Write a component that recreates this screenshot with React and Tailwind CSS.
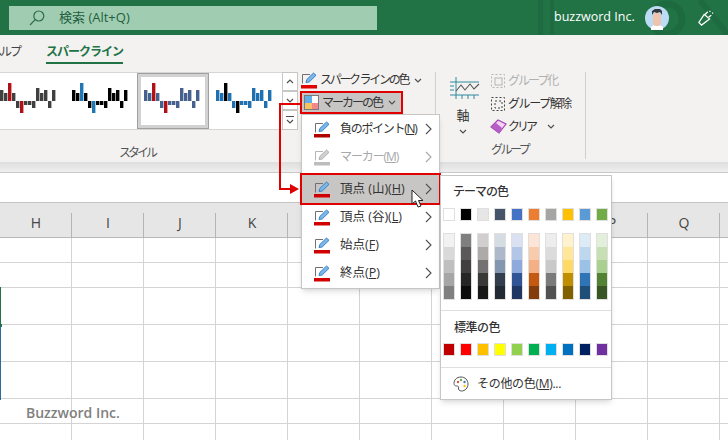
import React from "react";

const jp = "font-['Open_Sans','Noto_Sans_CJK_JP',sans-serif]";

const columns = ["H", "I", "J", "K", "L", "M", "N", "O", "P", "Q", ""];
const rowHeights = ["h-[25px]", "h-[25px]", "h-[37px]", "h-[37px]", "h-[37px]", "h-[25px]", "h-[25px]"];

// sparkline bars: positive goes up, negative goes down
const bars = [11, 8, 18, 8, -7, -12, -4, -4, -7, 13, 8, 11, -7, 11];

const thumbs = [
  { id: 1, cell: "w-[72px]", base: "#404040", high: "#b01116" },
  { id: 2, cell: "w-[65px]", base: "#000000", high: "#1f77b4" },
  { id: 3, cell: "w-[72px]", base: "#47618f", high: "#b01116", selected: true },
  { id: 4, cell: "w-[73px] pl-[7px]", base: "#1f70b0", high: "#000000" },
];

const themeColors = ["#ffffff", "#000000", "#e7e6e6", "#44546a", "#4472c4", "#ed7d31", "#a5a5a5", "#ffc000", "#5b9bd5", "#70ad47"];

const shades = [
  ["#f2f2f2", "#d9d9d9", "#bfbfbf", "#a6a6a6", "#808080"],
  ["#7f7f7f", "#595959", "#404040", "#262626", "#0d0d0d"],
  ["#d0cece", "#aeaaaa", "#757171", "#3b3838", "#181717"],
  ["#d6dce4", "#adb9ca", "#8497b0", "#333f4f", "#222b35"],
  ["#d9e1f2", "#b4c6e7", "#8ea9db", "#305496", "#203764"],
  ["#fce4d6", "#f8cbad", "#f4b084", "#c65911", "#833c0c"],
  ["#ededed", "#dbdbdb", "#c9c9c9", "#7b7b7b", "#525252"],
  ["#fff2cc", "#ffe699", "#ffd966", "#bf8f00", "#806000"],
  ["#ddebf7", "#bdd7ee", "#9bc2e6", "#2f75b5", "#1f4e78"],
  ["#e2efda", "#c6e0b4", "#a9d08e", "#548235", "#375623"],
];

const standardColors = ["#c00000", "#ff0000", "#ffc000", "#ffff00", "#92d050", "#00b050", "#00b0f0", "#0070c0", "#002060", "#7030a0"];

const Chevron = ({ dir = "down", className = "", color = "#505050" }) => {
  const points = {
    down: "1,1 4,4 7,1",
    up: "1,4 4,1 7,4",
  };
  return (
    <svg width="8" height="5" viewBox="0 0 8 5" className={className}>
      <polyline points={points[dir]} fill="none" stroke={color} strokeWidth="1.2" />
    </svg>
  );
};

const ChevronRight = ({ color = "#505050" }) => (
  <svg width="7" height="12" viewBox="0 0 7 12">
    <polyline points="1,1 6,6 1,11" fill="none" stroke={color} strokeWidth="1.1" />
  </svg>
);

const PenIcon = ({ bar = "#d00000", muted = false }) => (
  <svg width="17" height="17" viewBox="0 0 17 17" className="shrink-0">
    <path d="M1.5 11.5V2.5H9" fill="none" stroke={muted ? "#b5b5b5" : "#707070"} strokeWidth="1" />
    <path d="M5 10.5L5.8 7.5L12.5 1L15 3.3L8.2 10Z" fill={muted ? "#d0d0d0" : "#7db6e8"} stroke={muted ? "#a8a8a8" : "#2b78c2"} strokeWidth="0.9" />
    <rect x="0" y="13" width="16" height="3.5" fill={muted ? "#bdbdbd" : bar} />
  </svg>
);

const Sparkline = ({ base, high }) => (
  <svg width="56" height="36" viewBox="0 0 56 36" className="shrink-0">
    {bars.map((v, i) => {
      const isMark = i === 2 || i === 5;
      return (
        <rect
          key={i}
          x={i * 4}
          y={v > 0 ? 18 - v : 18}
          width="3.4"
          height={Math.abs(v)}
          fill={isMark ? high : base}
        />
      );
    })}
  </svg>
);

const MenuItem = ({ label, disabled, active, mt, bar, text = "text-[12.5px]" }) => (
  <div
    className={`flex items-center h-[28px] pl-[12px] pr-[7px] ${mt ? "mt-[4px]" : ""} ${active ? "bg-[#c8c6c4] outline-2 outline-[#e00000]" : ""}`}
  >
    <PenIcon muted={disabled} bar={bar} />
    <span className={`ml-[9px] flex-1 whitespace-nowrap ${text} ${disabled ? "text-[#a8a8a8]" : "text-[#333333]"}`}>{label}</span>
    <ChevronRight color={disabled ? "#a8a8a8" : "#505050"} />
  </div>
);

const Swatch = ({ color }) => (
  <div className="w-[12px] h-[13px] shrink-0 border border-[#e1dfdd]" style={{ backgroundColor: color }} />
);

const App = () => {
  return (
    <div className={`relative w-[728px] h-[440px] overflow-hidden flex flex-col bg-white ${jp}`}>
      {/* title bar */}
      <div className="relative h-[35px] shrink-0 bg-[#217346] flex items-center overflow-hidden">
        <svg width="200" height="35" viewBox="0 0 200 35" className="absolute right-0 top-0">
          <circle cx="139" cy="19" r="15" fill="none" stroke="#1d6a40" strokeWidth="7" />
          <rect x="10" y="0" width="5" height="35" fill="#1e6b41" />
          <rect x="22" y="0" width="4" height="35" fill="#1e6b41" />
          <path d="M172 0L200 35" stroke="#1e6b41" strokeWidth="6" />
        </svg>
        <div className="relative ml-[9px] w-[368px] h-[24px] bg-[#a0cdb1] flex items-center">
          <svg width="16" height="16" viewBox="0 0 16 16" className="ml-[20px]">
            <circle cx="9.8" cy="6" r="5" fill="none" stroke="#2c6e49" strokeWidth="1.2" />
            <line x1="6.2" y1="9.6" x2="1" y2="15" stroke="#2c6e49" strokeWidth="1.2" />
          </svg>
          <span className="ml-[14px] text-[13px] text-[#235f3e]">検索 (Alt+Q)</span>
        </div>
        <span className="relative ml-[177px] w-[80px] text-[12.5px] text-white whitespace-nowrap">buzzword Inc.</span>
        <svg width="24" height="24" viewBox="0 0 24 24" className="relative ml-[11px]">
          <circle cx="12" cy="12" r="12" fill="#bcdcf5" />
          <path d="M6 24V21L9 19H15L18 21V24Z" fill="#ffffff" />
          <rect x="8" y="7" width="8" height="13" rx="3" fill="#efc4ae" />
          <path d="M7 9L7 5L10 3L15 3L17 5L17 9L15 6L12 7L9 6Z" fill="#33383d" />
        </svg>
        <svg width="16" height="16" viewBox="0 0 18 18" className="relative ml-[29px]">
          <path d="M1 14L7 5L13 10L4 17Z" fill="none" stroke="#ffffff" strokeWidth="1.4" />
          <path d="M8 5L11 2M12 8L15 6M13 1L14 2M16 3L17 4" stroke="#ffffff" strokeWidth="1.4" />
        </svg>
      </div>

      {/* tabs */}
      <div className="h-[34px] shrink-0 bg-[#f3f2f1] flex items-start text-[12px] overflow-hidden">
        <span className="ml-[-10px] w-[56px] mt-[8px] tracking-[-2px] text-[#444444] whitespace-nowrap">ヘルプ</span>
        <div className="flex flex-col">
          <span className="mt-[8px] font-bold tracking-[-1px] text-[#217346] whitespace-nowrap">スパークライン</span>
          <div className="mt-[1px] h-[2px] bg-[#217346]" />
        </div>
      </div>

      {/* ribbon */}
      <div className="h-[93px] shrink-0 bg-[#f3f2f1] flex text-[12px] text-[#333333]">
        <div className="w-[298px] shrink-0 flex flex-col">
          <div className="mt-[3px] h-[58px] flex bg-white border-y border-[#d6d6d6]">
            <div className="w-[282px] overflow-hidden flex">
              {thumbs.map((t) => (
                <div key={t.id} className={`${t.cell} h-[56px] shrink-0 flex items-center`}>
                  {t.selected ? (
                    <div className="w-[72px] h-[56px] border border-[#a0a0a0] flex">
                      <div className="flex-1 border-[3px] border-[#d2d2d2] flex items-center pl-[3px]">
                        <Sparkline base={t.base} high={t.high} />
                      </div>
                    </div>
                  ) : (
                    <Sparkline base={t.base} high={t.high} />
                  )}
                </div>
              ))}
            </div>
            <div className="w-[16px] flex flex-col bg-[#f3f2f1] mt-[-1px] h-[58px]">
              <div className="h-[19px] border border-[#c8c6c4] bg-white flex items-center justify-center">
                <Chevron dir="up" />
              </div>
              <div className="h-[19px] border border-[#c8c6c4] bg-white flex items-center justify-center">
                <Chevron />
              </div>
              <div className="h-[20px] border border-[#c8c6c4] bg-white flex flex-col items-center justify-center gap-[2px]">
                <div className="w-[8px] h-px bg-[#505050]" />
                <Chevron />
              </div>
            </div>
          </div>
          <div className="flex justify-center pr-[24px] pt-[14px] text-[12px] tracking-[-3px] text-[#555555]">スタイル</div>
        </div>

        <div className="w-[138px] shrink-0 my-[3px] border-r border-[#d0cfce] pl-[4px]">
          <div className="h-[16px] flex items-center ml-[-1px]">
            <PenIcon bar="#e00000" />
            <span className="ml-[2px] tracking-[-2.3px] whitespace-nowrap">スパーク ラインの色</span>
            <Chevron className="ml-[6px]" />
          </div>
          <div className="mt-[5px] w-[99px] h-[19px] bg-[#c8c6c4] outline-2 outline-[#e00000] flex items-center pl-[2px]">
            <div className="w-[15px] h-[15px] grid grid-cols-2 border border-[#7a7a7a]">
              <div className="bg-[#5fb0e8]" />
              <div className="bg-white" />
              <div className="bg-[#f6c264]" />
              <div className="bg-[#f4858a]" />
            </div>
            <span className="ml-[3px] tracking-[-2px] whitespace-nowrap">マーカーの色</span>
            <Chevron className="ml-[6px]" />
          </div>
        </div>

        <div className="w-[150px] shrink-0 my-[3px] border-r border-[#d0cfce] flex">
          <div className="w-[54px] flex flex-col items-center pt-[4px]">
            <svg width="30" height="24" viewBox="0 0 30 24" className="ml-[4px]">
              <path d="M6 1V23M0 6H29M0 19H29M0 14H4M0 10H4M12 19V23M18 19V23M24 19V23" stroke="#2f8a9c" strokeWidth="1" fill="none" />
              <polyline points="6,15 11,9 15,14 20,8 24,13 29,8" fill="none" stroke="#555555" strokeWidth="1.1" />
            </svg>
            <span className="mt-[6px] text-[13px]">軸</span>
            <Chevron className="mt-[3px]" />
          </div>
          <div className="flex-1 flex flex-col">
            <div className="h-[18px] flex items-center">
              <svg width="16" height="16" viewBox="0 0 16 16">
                <rect x="1.5" y="1.5" width="13" height="13" fill="none" stroke="#b5b5b5" strokeDasharray="2 2" />
                <rect x="5" y="5" width="7" height="7" fill="none" stroke="#b5b5b5" />
              </svg>
              <span className="ml-[2px] tracking-[-2px] text-[#b0b0b0] whitespace-nowrap">グループ化</span>
            </div>
            <div className="mt-[3px] h-[24px] flex items-center">
              <svg width="16" height="16" viewBox="0 0 16 16">
                <rect x="1.5" y="1.5" width="13" height="13" fill="none" stroke="#444444" strokeDasharray="2 2" />
                <rect x="5" y="5" width="7" height="7" fill="none" stroke="#444444" strokeDasharray="2 2" />
              </svg>
              <span className="ml-[2px] tracking-[-1.4px] whitespace-nowrap">グループ解除</span>
            </div>
            <div className="h-[24px] flex items-center">
              <svg width="18" height="16" viewBox="0 0 18 16">
                <path d="M1 8L8 1L16 5L9 14Z" fill="#f4d3f4" stroke="#a342b0" strokeWidth="1.2" />
                <path d="M1 8L6 4L12 9L9 14Z" fill="#b65cc6" />
              </svg>
              <span className="ml-[0px] tracking-[-3px] whitespace-nowrap">クリア</span>
              <Chevron className="ml-[12px]" />
            </div>
            <span className="mt-[3px] ml-[1px] tracking-[-2.5px] text-[12px] text-[#555555] whitespace-nowrap">グループ</span>
          </div>
        </div>
      </div>

      {/* strip below the ribbon */}
      <div className="h-[11px] shrink-0 bg-gradient-to-b from-[#dedede] to-[#efefef] border-b border-[#c8c8c8]" />

      {/* formula bar */}
      <div className="h-[30px] shrink-0 bg-white border-b border-[#c4c4c4]" />

      {/* column headers */}
      <div className="h-[35px] shrink-0 flex bg-[#e6e6e6] border-b border-[#b8b8b8]">
        {columns.map((c, i) => (
          <div key={i} className="relative w-[72px] shrink-0 flex items-center justify-center pt-[5px] text-[14px] text-[#444444]">
            {c}
            <div className="absolute right-0 bottom-0 w-px h-[24px] bg-[#b4b4b4]" />
          </div>
        ))}
      </div>

      {/* grid */}
      <div className="flex-1 flex flex-col overflow-hidden">
        {rowHeights.map((h, r) => (
          <div key={r} className={`${h} shrink-0 flex border-b border-[#d4d4d4]`}>
            {columns.map((c, i) => (
              <div key={i} className="w-[72px] shrink-0 border-r border-[#d4d4d4]" />
            ))}
          </div>
        ))}
      </div>

      {/* selected cell edge */}
      <div className="absolute left-0 top-[287px] w-px h-[38px] bg-[#217346]" />
      <div className="absolute left-0 top-[324px] w-[2px] h-[3px] bg-[#217346]" />
      <div className="absolute left-0 top-[326px] w-px h-[74px] bg-[#2b6a9a]" />

      <span className="absolute left-[26px] top-[402px] text-[14px] font-semibold text-[#808080] whitespace-nowrap">Buzzword Inc.</span>

      {/* red connector */}
      <div className="absolute left-[279px] top-[103px] w-[22px] h-[2px] bg-[#e00000]" />
      <div className="absolute left-[279px] top-[103px] w-[2px] h-[87px] bg-[#e00000]" />
      <div className="absolute left-[279px] top-[188px] w-[14px] h-[2px] bg-[#e00000]" />
      <svg width="9" height="10" viewBox="0 0 9 10" className="absolute left-[290px] top-[184px]">
        <polygon points="0,0 9,5 0,10" fill="#e00000" />
      </svg>

      {/* marker menu */}
      <div className="absolute left-[301px] top-[114px] w-[139px] h-[175px] bg-white border border-[#c8c6c4] shadow-md">
        <MenuItem label={<>負のポイント(<u>N</u>)</>} bar="#b00000" text="text-[12px] tracking-[-1.3px]" />
        <MenuItem label={<>マーカー(<u>M</u>)</>} disabled text="text-[12px] tracking-[-1.1px]" />
        <MenuItem label={<>頂点 (山)(<u>H</u>)</>} active mt />
        <MenuItem label={<>頂点 (谷)(<u>L</u>)</>} />
        <MenuItem label={<>始点(<u>F</u>)</>} />
        <MenuItem label={<>終点(<u>P</u>)</>} />
      </div>

      {/* color menu */}
      <div className="absolute left-[440px] top-[175px] w-[172px] h-[225px] bg-white border border-[#c8c6c4] shadow-md flex flex-col text-[12px] text-[#333333]">
        <div className="h-[32px] pl-[12px] pt-[7px] font-medium tracking-[-1px]">テーマの色</div>
        <div className="flex gap-[5px] pl-[2px]">
          {themeColors.map((c) => (
            <Swatch key={c} color={c} />
          ))}
        </div>
        <div className="mt-[12px] flex gap-[5px] pl-[2px]">
          {shades.map((col, i) => (
            <div key={i} className="w-[12px] flex flex-col border border-[#e1dfdd]">
              {col.map((c) => (
                <div key={c} className="h-[13px]" style={{ backgroundColor: c }} />
              ))}
            </div>
          ))}
        </div>
        <div className="mt-[10px] h-px bg-[#e1dfdd]" />
        <div className="h-[32px] pl-[13px] pt-[8px] font-medium tracking-[-0.5px]">標準の色</div>
        <div className="flex gap-[5px] pl-[2px]">
          {standardColors.map((c) => (
            <Swatch key={c} color={c} />
          ))}
        </div>
        <div className="mt-[11px] h-px bg-[#e1dfdd]" />
        <div className="flex-1 flex items-center pl-[12px]">
          <svg width="16" height="16" viewBox="0 0 16 16">
            <path d="M8 1C3.5 1 1 4 1 7.5C1 9 2 10 3.5 10C5 10 6 10.5 5.5 12C5 13.5 6.5 15 8.5 15C12 15 15 12 15 8C15 4 12 1 8 1Z" fill="none" stroke="#555555" />
            <circle cx="5" cy="6" r="1.2" fill="#d9534f" />
            <circle cx="8" cy="4" r="1.2" fill="#70ad47" />
            <circle cx="11.5" cy="6" r="1.2" fill="#4472c4" />
            <circle cx="11.5" cy="10" r="1.2" fill="#ffc000" />
          </svg>
          <span className="ml-[8px] tracking-[-0.3px] whitespace-nowrap">その他の色(<u>M</u>)...</span>
        </div>
      </div>

      {/* mouse cursor */}
      <svg width="15" height="20" viewBox="0 0 15 20" className="absolute left-[411px] top-[189px]">
        <path d="M1 1V15L4.5 12L7 18L10 17L7.5 11.5H12Z" fill="#ffffff" stroke="#222222" strokeWidth="1" />
      </svg>
    </div>
  );
};

export default App;
